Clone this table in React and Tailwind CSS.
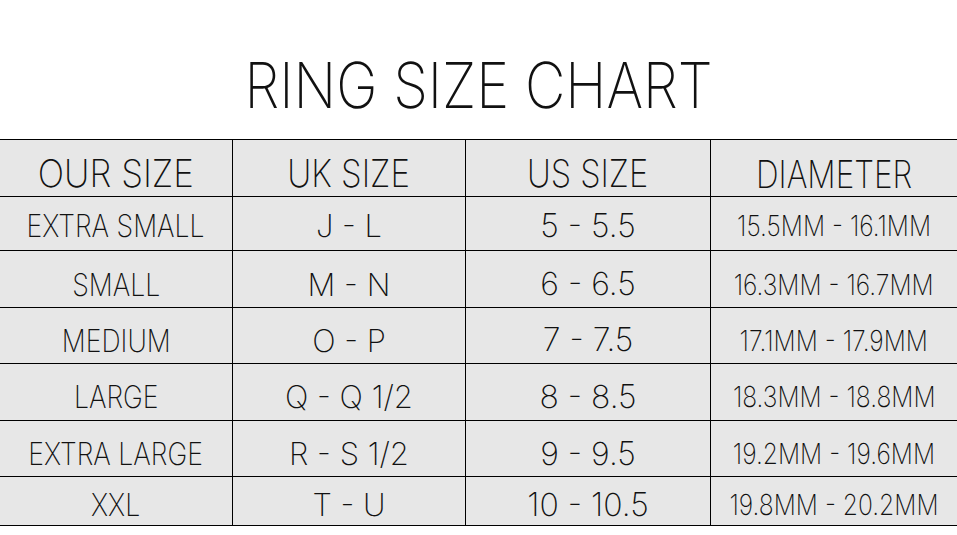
import React from 'react';

const rows = [
  { ours: 'EXTRA SMALL', uk: 'J - L', us: '5 - 5.5', dia: '15.5MM - 16.1MM', h: 'h-[54px]', pad: 'pt-[4px]' },
  { ours: 'SMALL', uk: 'M - N', us: '6 - 6.5', dia: '16.3MM - 16.7MM', h: 'h-[57px]', pad: 'pt-[10px]' },
  { ours: 'MEDIUM', uk: 'O - P', us: '7 - 7.5', dia: '17.1MM - 17.9MM', h: 'h-[56px]', pad: 'pt-[9px]' },
  { ours: 'LARGE', uk: 'Q - Q 1/2', us: '8 - 8.5', dia: '18.3MM - 18.8MM', h: 'h-[57px]', pad: 'pt-[9px]' },
  { ours: 'EXTRA LARGE', uk: 'R - S 1/2', us: '9 - 9.5', dia: '19.2MM - 19.6MM', h: 'h-[56px]', pad: 'pt-[10px]' },
  { ours: 'XXL', uk: 'T - U', us: '10 - 10.5', dia: '19.8MM - 20.2MM', h: 'h-[49px]', pad: 'pt-[7px]' },
];

const cols = 'grid grid-cols-[232px_233px_245px_247px]';

// text is narrower than Inter, so each column squeezes its label
const Cell = ({ children, first, pad, size }) => (
  <div
    className={`flex items-center justify-center ${pad} ${first ? '' : 'border-l border-black'}`}
  >
    <span className={`leading-none whitespace-nowrap ${size}`}>{children}</span>
  </div>
);

const RingSizeChart = () => {
  return (
    <div
      className="w-[957px] h-[535px] bg-white text-[#111] font-extralight overflow-hidden"
      style={{ fontFamily: 'Inter, "Liberation Sans", sans-serif' }}
    >
      {/* Title */}
      <div className="h-[139px] pt-[54px] flex justify-center">
        <h1 className="text-[63px] leading-none font-extralight whitespace-nowrap scale-x-[0.885]">
          RING SIZE CHART
        </h1>
      </div>

      {/* Table */}
      <div className="bg-[#e7e7e7] border-t border-black">
        <div className={`${cols} h-[57px] border-b border-black`}>
          <Cell first pad="pt-[9px]" size="text-[38px] scale-x-[0.92]">OUR SIZE</Cell>
          <Cell pad="pt-[9px]" size="text-[38px] scale-x-[0.87]">UK SIZE</Cell>
          <Cell pad="pt-[9px]" size="text-[38px] scale-x-[0.86]">US SIZE</Cell>
          <Cell pad="pt-[11px]" size="text-[38px] scale-x-[0.83]">DIAMETER</Cell>
        </div>

        {rows.map((row) => (
          <div key={row.ours} className={`${cols} ${row.h} border-b border-black`}>
            <Cell first pad={row.pad} size="text-[31px] scale-x-[0.86]">{row.ours}</Cell>
            <Cell pad={row.pad} size="text-[31px]">{row.uk}</Cell>
            <Cell pad={row.pad} size="text-[32px]">{row.us}</Cell>
            <Cell pad={row.pad} size="text-[29px] scale-x-[0.85]">{row.dia}</Cell>
          </div>
        ))}
      </div>
    </div>
  );
};

export default RingSizeChart;
